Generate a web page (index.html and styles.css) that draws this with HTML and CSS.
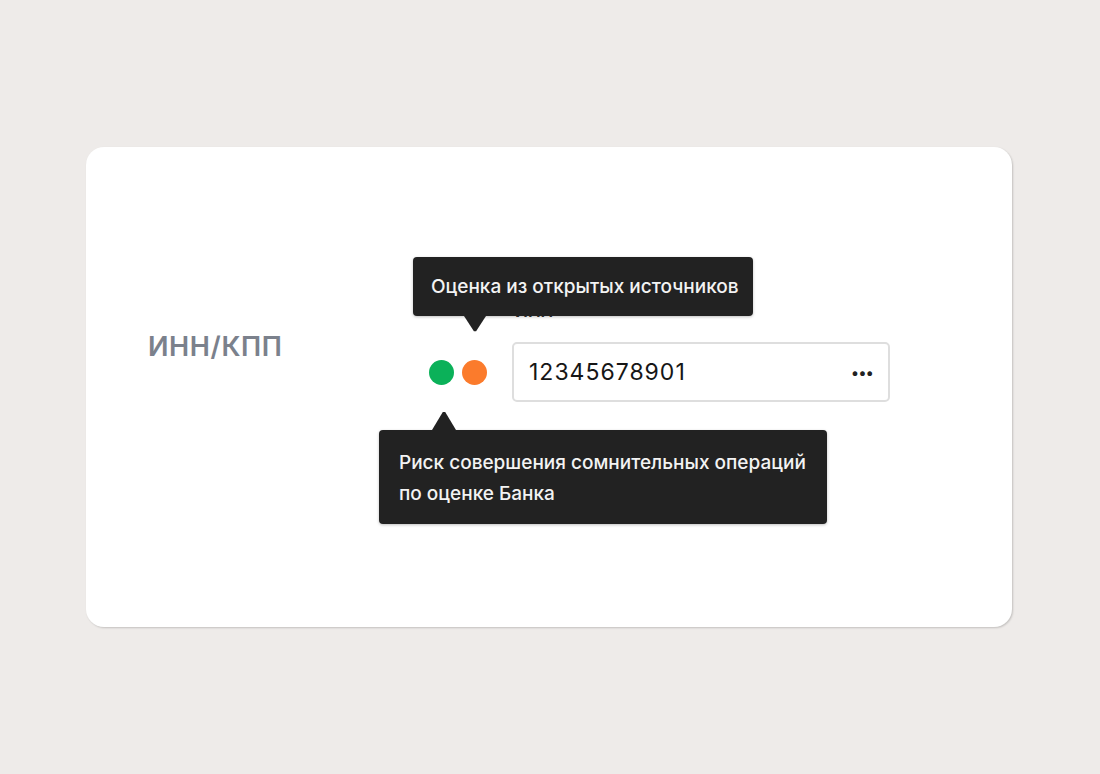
FILE: index.html
```html
<!DOCTYPE html>
<html lang="ru">
<head>
    <meta charset="UTF-8">
    <meta name="viewport" content="width=device-width, initial-scale=1.0">
    <link rel="stylesheet" href="styles.css">
    <title>ИНН/КПП</title>
</head>
<body>
    <main class="card">
        <div class="rowLabel">ИНН/КПП</div>
        <div class="field">
            <div class="fieldCaption">ИНН</div>
            <div class="fieldRow">
                <div class="dots">
                    <span class="dot green"></span>
                    <span class="dot orange"></span>
                </div>
                <div class="inputBox">
                    <span class="inputValue">12345678901</span>
                    <span class="more">&bull;&bull;&bull;</span>
                </div>
            </div>

            <!-- подсказки -->
            <div class="tip tipTop">Оценка из открытых источников</div>
            <div class="tip tipBottom">Риск совершения сомнительных операций<br>по оценке Банка</div>
        </div>
    </main>
</body>
</html>
```

FILE: styles.css
```css
body {
    margin: 0;
    padding: 147px 0 0 86px;
    background: #eeebe9;
    font-family: 'Inter', 'Noto Sans', sans-serif;
    min-height: 100vh;
    box-sizing: border-box;
}

.card {
    width: 926px;
    height: 480px;
    box-sizing: border-box;
    background: #fff;
    border-radius: 18px;
    box-shadow: 1px 1px 2px rgba(0, 0, 0, 0.18);
    display: flex;
    align-items: flex-start;
    padding: 152px 0 0 62px;
}

.rowLabel {
    width: 281px;
    margin-top: 31px;
    font-size: 27px;
    font-weight: 600;
    color: #7b818c;
    letter-spacing: 0.6px;
}

.field {
    position: relative;
}

.fieldCaption {
    margin-left: 86px;
    font-size: 17px;
    font-weight: 600;
    color: #333;
    line-height: 24px;
}

.fieldRow {
    display: flex;
    align-items: center;
    gap: 25px;
    margin-top: 19px;
}

.dots {
    display: flex;
    gap: 8px;
}

.dot {
    width: 25px;
    height: 25px;
    border-radius: 50%;
}

.green { background: #0bb159; }
.orange { background: #fb7b2c; }

.inputBox {
    width: 378px;
    height: 60px;
    box-sizing: border-box;
    border: 2px solid #dedede;
    border-radius: 5px;
    display: flex;
    align-items: center;
    justify-content: space-between;
    padding: 0 15px 0 15px;
}

.inputValue {
    font-size: 23px;
    color: #161616;
    letter-spacing: 1px;
}

.more {
    font-size: 15px;
    color: #222;
    letter-spacing: -1px;
}

.tip {
    position: absolute;
    background: #222;
    color: #f3f3f3;
    font-size: 19px;
    font-weight: 500;
    border-radius: 4px;
    box-shadow: 0 1px 3px rgba(0, 0, 0, 0.25);
    box-sizing: border-box;
    white-space: nowrap;
}

.tipTop {
    left: -16px;
    top: -42px;
    width: 340px;
    height: 59px;
    line-height: 59px;
    padding-left: 18px;
}

.tipTop::after {
    content: "";
    position: absolute;
    left: 51px;
    top: 59px;
    width: 22px;
    height: 16px;
    background: #222;
    clip-path: polygon(0 0, 100% 0, 55% 95%, 45% 95%);
}

.tipBottom {
    left: -50px;
    top: 131px;
    width: 448px;
    height: 94px;
    line-height: 31px;
    padding: 17px 0 0 20px;
}

.tipBottom::before {
    content: "";
    position: absolute;
    left: 53px;
    top: -19px;
    width: 24px;
    height: 19px;
    background: #222;
    clip-path: polygon(45% 5%, 55% 5%, 100% 100%, 0 100%);
}
```
